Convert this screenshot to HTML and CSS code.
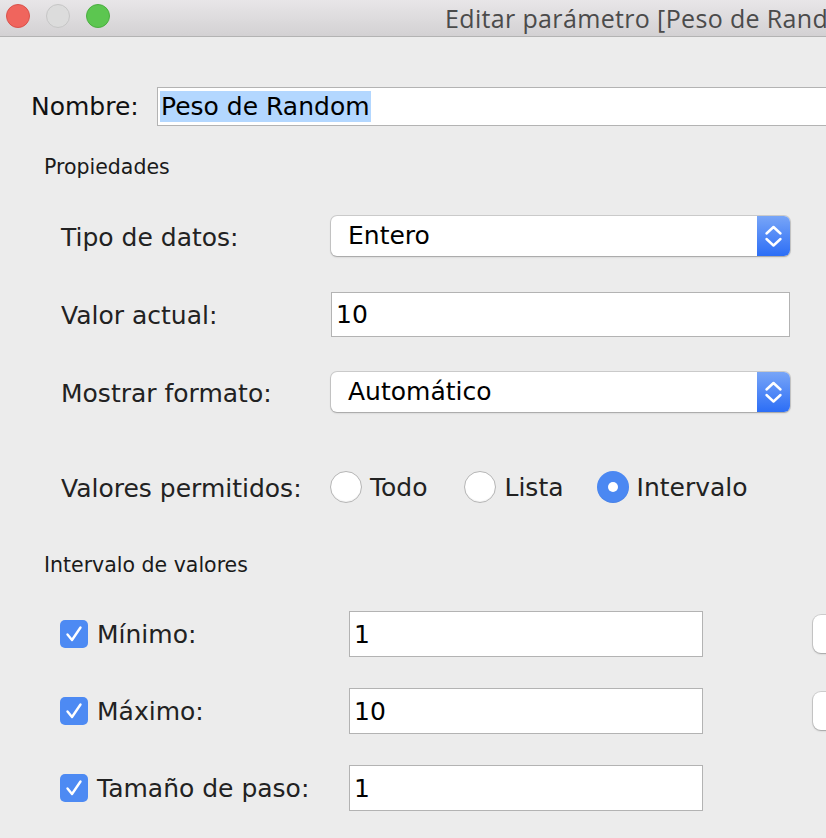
FILE: index.html
```html
<!DOCTYPE html>
<html>
<head>
    <title>Editar parámetro</title>
    <link rel="stylesheet" href="styles.css">
</head>
<body>

<div class="window">
    <div class="titlebar">
        <div class="lights">
            <span class="light close"></span>
            <span class="light minimize"></span>
            <span class="light zoom"></span>
        </div>
        <div class="title">Editar parámetro [Peso de Random]</div>
    </div>

    <div class="content">
        <div class="name-row">
            <label class="name-label">Nombre:</label>
            <div class="field name-field"><span class="selected">Peso de Random</span></div>
        </div>

        <h3 class="section first">Propiedades</h3>

        <div class="prop-row first-row">
            <label class="prop-label">Tipo de datos:</label>
            <div class="select">
                <span class="select-value">Entero</span>
                <span class="stepper">
                    <svg width="33" height="40" viewBox="0 0 33 40"><path d="M9.5 17.5 L16.5 11 L23.5 17.5 M9.5 23 L16.5 29.5 L23.5 23" fill="none" stroke="#fff" stroke-width="2.4" stroke-linecap="round" stroke-linejoin="round"/></svg>
                </span>
            </div>
        </div>

        <div class="prop-row">
            <label class="prop-label">Valor actual:</label>
            <div class="field value-field">10</div>
        </div>

        <div class="prop-row">
            <label class="prop-label">Mostrar formato:</label>
            <div class="select">
                <span class="select-value">Automático</span>
                <span class="stepper">
                    <svg width="33" height="40" viewBox="0 0 33 40"><path d="M9.5 17.5 L16.5 11 L23.5 17.5 M9.5 23 L16.5 29.5 L23.5 23" fill="none" stroke="#fff" stroke-width="2.4" stroke-linecap="round" stroke-linejoin="round"/></svg>
                </span>
            </div>
        </div>

        <div class="prop-row radio-row">
            <label class="prop-label">Valores permitidos:</label>
            <div class="radios">
                <span class="option"><span class="radio"></span>Todo</span>
                <span class="option"><span class="radio"></span>Lista</span>
                <span class="option"><span class="radio on"></span>Intervalo</span>
            </div>
        </div>

        <h3 class="section second">Intervalo de valores</h3>

        <div class="range-row first-row">
            <label class="range-label"><span class="check"><svg width="28" height="28" viewBox="0 0 28 28"><path d="M7.5 14.5 L12 20 L20.5 7.5" fill="none" stroke="#fff" stroke-width="2.4" stroke-linecap="round" stroke-linejoin="round"/></svg></span>Mínimo:</label>
            <div class="field range-field">1</div>
            <span class="side-btn"></span>
        </div>

        <div class="range-row">
            <label class="range-label"><span class="check"><svg width="28" height="28" viewBox="0 0 28 28"><path d="M7.5 14.5 L12 20 L20.5 7.5" fill="none" stroke="#fff" stroke-width="2.4" stroke-linecap="round" stroke-linejoin="round"/></svg></span>Máximo:</label>
            <div class="field range-field">10</div>
            <span class="side-btn"></span>
        </div>

        <div class="range-row">
            <label class="range-label"><span class="check"><svg width="28" height="28" viewBox="0 0 28 28"><path d="M7.5 14.5 L12 20 L20.5 7.5" fill="none" stroke="#fff" stroke-width="2.4" stroke-linecap="round" stroke-linejoin="round"/></svg></span>Tamaño de paso:</label>
            <div class="field range-field">1</div>
        </div>
    </div>
</div>

</body>
</html>
```

FILE: styles.css
```css
/* dialog de parametro, estilo mac */
html, body { margin: 0; padding: 0; }
body {
    width: 826px; height: 838px; overflow: hidden;
    background: #ececec;
    font-family: "DejaVu Sans", Verdana, sans-serif;
    font-size: 25px; color: #222;
}
.window { width: 826px; height: 838px; overflow: hidden; }

.titlebar {
    height: 36px; display: flex; align-items: flex-start;
    padding-left: 6px;
    background: linear-gradient(#e8e6e8, #d3d1d3);
    border-bottom: 1px solid #b3b3b3;
}
.lights { display: flex; gap: 16px; margin-top: 4px; flex-shrink: 0; }
.light {
    width: 24px; height: 24px; border-radius: 50%; box-sizing: border-box;
}
.close { background: #f0655d; border: 1px solid #d9524b; }
.minimize { background: #dcdcdc; border: 1px solid #c6c6c6; }
.zoom { background: #5cc650; border: 1px solid #4aae40; }
.title {
    margin-left: 335px; white-space: nowrap;
    font-family: "Open Sans", "Liberation Sans", sans-serif;
    font-size: 25px; letter-spacing: 0.35px; line-height: 36px; color: #4b4b4b;
}

.field {
    box-sizing: border-box; background: #fff; flex-shrink: 0;
    border: 1px solid #b3b3b3; color: #000;
    display: flex; align-items: center;
}

.name-row {
    display: flex; align-items: center;
    margin-top: 50px; padding-left: 31px;
}
.name-label { width: 126px; flex-shrink: 0; color: #111; }
.name-field { width: 700px; height: 39px; padding-left: 2px; }
.selected { background: #b3d7ff; line-height: 31px; padding: 0 1px; }

.section {
    margin: 0 0 0 44px; font-weight: normal;
    font-size: 20.5px; line-height: 24px; color: #1a1a1a;
}
.section.first { margin-top: 29px; }
.section.second { margin-top: 43px; }

.prop-row {
    display: flex; align-items: center; height: 46px;
    padding-left: 61px; margin-top: 32px;
}
.prop-row.first-row { margin-top: 34px; }
.prop-label { width: 270px; flex-shrink: 0; padding-top: 3px; }

.select {
    width: 459px; height: 40px; display: flex; flex-shrink: 0;
    background: #fff; border-radius: 6px;
    box-shadow: 0 0 0 1px rgba(0,0,0,0.13), 0 1px 2px rgba(0,0,0,0.22);
    color: #000;
}
.select-value { flex: 1; padding-left: 17px; line-height: 40px; }
.stepper {
    width: 33px; height: 40px; display: block;
    border-radius: 0 6px 6px 0;
    background: linear-gradient(#78a5f7, #2c6ef6);
}
.stepper svg { display: block; }

.value-field { width: 459px; height: 45px; padding-left: 4px; }

.radio-row { margin-top: 49px; }
.radios { display: flex; align-items: center; gap: 37px; margin-left: -1px; }
.option { display: flex; align-items: center; gap: 8px; }
.option:last-child { margin-left: -4px; }
.radio {
    width: 32px; height: 32px; border-radius: 50%; box-sizing: border-box;
    background: #fff; border: 1px solid #b5b5b5;
    box-shadow: inset 0 -1px 1px rgba(0,0,0,0.05);
}
.radio.on {
    border: none; background: #4b88f2;
    display: flex; align-items: center; justify-content: center;
}
.radio.on::after {
    content: ""; width: 10px; height: 10px; border-radius: 50%; background: #fff;
}

.range-row {
    display: flex; align-items: center; height: 46px;
    padding-left: 60px; margin-top: 31px;
}
.range-row.first-row { margin-top: 34px; }
.range-label { width: 289px; flex-shrink: 0; display: flex; align-items: center; gap: 9px; }
.check {
    width: 28px; height: 28px; border-radius: 5px; flex-shrink: 0;
    background: #4d8af3; display: block;
}
.check svg { display: block; }
.range-field { width: 354px; height: 46px; padding-left: 4px; }
.side-btn {
    width: 60px; height: 38px; margin-left: 110px; flex-shrink: 0;
    background: #fff; border-radius: 8px;
    box-shadow: 0 0 0 1px rgba(0,0,0,0.12), 0 1px 2px rgba(0,0,0,0.22);
}
```
